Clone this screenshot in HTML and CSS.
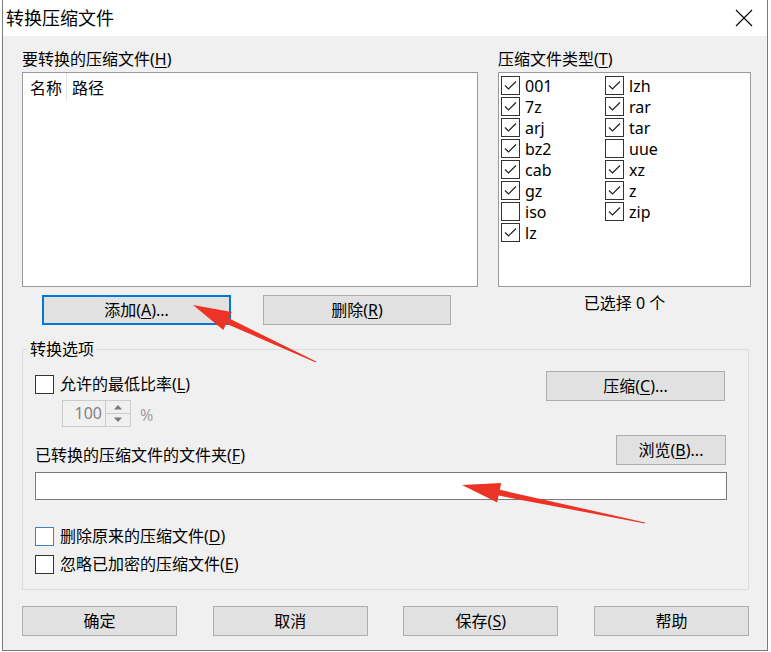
FILE: index.html
```html
<!doctype html>
<html>
<head>
<meta charset="utf-8">
<title>转换压缩文件</title>
<link rel="stylesheet" href="styles.css">
</head>
<body>

<div class="dialog">
    <div class="titlebar">
        <span class="title">转换压缩文件</span>
        <svg class="close" width="18" height="18" viewBox="0 0 18 18"><path d="M1 1L17 17M17 1L1 17" stroke="#000" stroke-width="1.1" fill="none"/></svg>
    </div>

    <div class="main">
        <div class="top">
            <!-- 文件列表 -->
            <div class="col-files">
                <div class="label">要转换的压缩文件(<u>H</u>)</div>
                <div class="listbox">
                    <div class="list-head"><span class="col-name">名称</span><span class="col-path">路径</span></div>
                </div>
                <div class="file-btns">
                    <button class="btn btn-focus btn-add">添加(<u>A</u>)...</button>
                    <button class="btn btn-del">删除(<u>R</u>)</button>
                </div>
            </div>

            <!-- 类型 -->
            <div class="col-types">
                <div class="label">压缩文件类型(<u>T</u>)</div>
                <div class="typebox">
                    <ul class="types">
                        <li class="on"><span class="box"></span><span>001</span></li>
                        <li class="on"><span class="box"></span><span>7z</span></li>
                        <li class="on"><span class="box"></span><span>arj</span></li>
                        <li class="on"><span class="box"></span><span>bz2</span></li>
                        <li class="on"><span class="box"></span><span>cab</span></li>
                        <li class="on"><span class="box"></span><span>gz</span></li>
                        <li><span class="box"></span><span>iso</span></li>
                        <li class="on"><span class="box"></span><span>lz</span></li>
                        <li class="on"><span class="box"></span><span>lzh</span></li>
                        <li class="on"><span class="box"></span><span>rar</span></li>
                        <li class="on"><span class="box"></span><span>tar</span></li>
                        <li><span class="box"></span><span>uue</span></li>
                        <li class="on"><span class="box"></span><span>xz</span></li>
                        <li class="on"><span class="box"></span><span>z</span></li>
                        <li class="on"><span class="box"></span><span>zip</span></li>
                    </ul>
                </div>
                <div class="count">已选择 0 个</div>
            </div>
        </div>

        <fieldset class="group">
            <legend>转换选项</legend>

            <div class="row-ratio">
                <div class="ratio">
                    <div class="check"><span class="box"></span><span>允许的最低比率(<u>L</u>)</span></div>
                    <div class="spin-row">
                        <div class="spin">
                            <span class="spin-val">100</span>
                            <span class="spin-btns">
                                <span class="spin-up"><svg width="10" height="6" viewBox="0 0 10 6"><path d="M1 5.5L5 1L9 5.5Z" fill="#7a7a7a"/></svg></span>
                                <span class="spin-down"><svg width="10" height="6" viewBox="0 0 10 6"><path d="M1 0.5L5 5L9 0.5Z" fill="#7a7a7a"/></svg></span>
                            </span>
                        </div>
                        <span class="pct">%</span>
                    </div>
                </div>
                <button class="btn btn-compress">压缩(<u>C</u>)...</button>
            </div>

            <div class="row-folder">
                <div class="label">已转换的压缩文件的文件夹(<u>F</u>)</div>
                <button class="btn btn-browse">浏览(<u>B</u>)...</button>
            </div>
            <div class="folder-input"></div>

            <div class="opts">
                <div class="check hover"><span class="box"></span><span>删除原来的压缩文件(<u>D</u>)</span></div>
                <div class="check"><span class="box"></span><span>忽略已加密的压缩文件(<u>E</u>)</span></div>
            </div>
        </fieldset>

        <div class="bottom">
            <button class="btn">确定</button>
            <button class="btn">取消</button>
            <button class="btn">保存(<u>S</u>)</button>
            <button class="btn">帮助</button>
        </div>
    </div>
</div>

<!-- 标注箭头 -->
<svg class="marks" width="771" height="652" viewBox="0 0 771 652">
    <polygon points="193,305 231.7,311.9 228.8,318.3 316.2,361.5 315.8,362.5 226.2,323.7 223.3,330.1" fill="#ec3326"/>
    <polygon points="462,485 501.2,482.9 499.8,489.8 645.1,522.5 644.9,523.5 498.6,495.6 497.2,502.5" fill="#ec3326"/>
</svg>

</body>
</html>
```

FILE: styles.css
```css
*{ margin: 0; padding: 0; box-sizing: border-box; }
li{ list-style: none; }
u{ text-decoration: underline; text-underline-offset: 2px; text-decoration-thickness: 1px; }

body{ width: 771px; height: 652px; background: #fff; position: relative; overflow: hidden;
    font-family: "Noto Sans", "Noto Sans CJK SC", sans-serif; font-size: 16px; line-height: 20px; color: #000; }

.dialog{ margin-left: 2px; width: 766px; height: 651px; border: 1px solid #7a7a7a; border-top: none; display: flex; flex-direction: column; background: #f0f0f0; }

/* 标题栏 */
.titlebar{ height: 36px; background: #fff; display: flex; align-items: center; justify-content: space-between; padding: 0 14px 0 3px; }
.title{ font-size: 18px; }
.close{ display: block; }

.main{ flex: 1; padding: 13px 0 0 19px; }

.label{ line-height: 20px; }

/* 上半部分 */
.top{ display: grid; grid-template-columns: 456px 253px; column-gap: 20px; }
.col-files .label, .col-types .label{ margin-bottom: 3px; }

.listbox{ height: 215px; background: #fff; border: 1px solid #9a9a9a; }
.list-head{ display: flex; height: 28px; line-height: 30px; }
.col-name{ width: 44px; padding-left: 7px; border-right: 1px solid #e5e5e5; }
.col-path{ padding-left: 5px; }

.file-btns{ display: flex; margin-top: 8px; padding-left: 20px; }
.btn{ height: 30px; background: #e1e1e1; border: 1px solid #adadad; font: inherit; color: #000; line-height: 20px; }
.btn-focus{ border: 2px solid #0078d7; }
.btn-add{ width: 189px; }
.btn-del{ width: 188px; margin-left: 32px; }

.typebox{ height: 215px; background: #fff; border: 1px solid #9a9a9a; padding: 2px 0 0 2px; }
.types{ display: grid; grid-template-rows: repeat(8, 21px); grid-template-columns: 104px 104px; grid-auto-flow: column; }
.types li{ display: flex; align-items: center; gap: 5px; }

.box{ display: block; flex: none; width: 19px; height: 19px; background: #fff; border: 1px solid #333; }
.on .box{ background: #fff url("data:image/svg+xml;utf8,<svg xmlns='http://www.w3.org/2000/svg' width='17' height='17' viewBox='0 0 17 17'><path d='M3 8.5L6.5 12L14 4.5' stroke='%23222' stroke-width='1.2' fill='none'/></svg>") no-repeat center; }

.count{ margin-top: 6px; text-align: center; }

/* 转换选项 */
.group{ width: 727px; margin-top: 14px; border: 1px solid #dcdcdc; padding: 0 21px 11px 12px; }
.group legend{ margin-left: -8px; padding: 0 3px; line-height: 20px; }

.row-ratio{ display: flex; justify-content: space-between; align-items: flex-start; padding-top: 12px; }
.ratio{ padding-top: 3px; }
.check{ display: flex; align-items: center; gap: 6px; height: 20px; }
.check.hover .box{ border-color: #3d86c6; }

.spin-row{ display: flex; align-items: center; margin: 6px 0 0 27px; }
.spin{ display: flex; width: 69px; height: 27px; border: 1px solid #ccc; }
.spin-val{ flex: 1; text-align: right; padding-right: 3px; line-height: 25px; color: #838383; }
.spin-btns{ width: 25px; display: flex; flex-direction: column; border-left: 1px solid #ccc; }
.spin-btns span{ flex: 1; display: flex; align-items: center; justify-content: center; }
.spin-up{ border-bottom: 1px solid #ccc; }
.pct{ margin-left: 9px; color: #a0a0a0; padding-top: 2px; }

.btn-compress{ width: 179px; margin-right: 2px; }

.row-folder{ display: flex; justify-content: space-between; align-items: flex-end; margin-top: 8px; }
.btn-browse{ width: 110px; margin-right: 1px; }
.folder-input{ height: 28px; margin-top: 7px; background: #fff; border: 1px solid #7a7a7a; }

.opts{ margin-top: 22px; }
.opts .check{ height: 28px; }

/* 底部按钮 */
.bottom{ display: flex; justify-content: space-between; width: 727px; margin-top: 16px; }
.bottom .btn{ width: 155px; }

.marks{ position: absolute; top: 0; left: 0; pointer-events: none; }
```
